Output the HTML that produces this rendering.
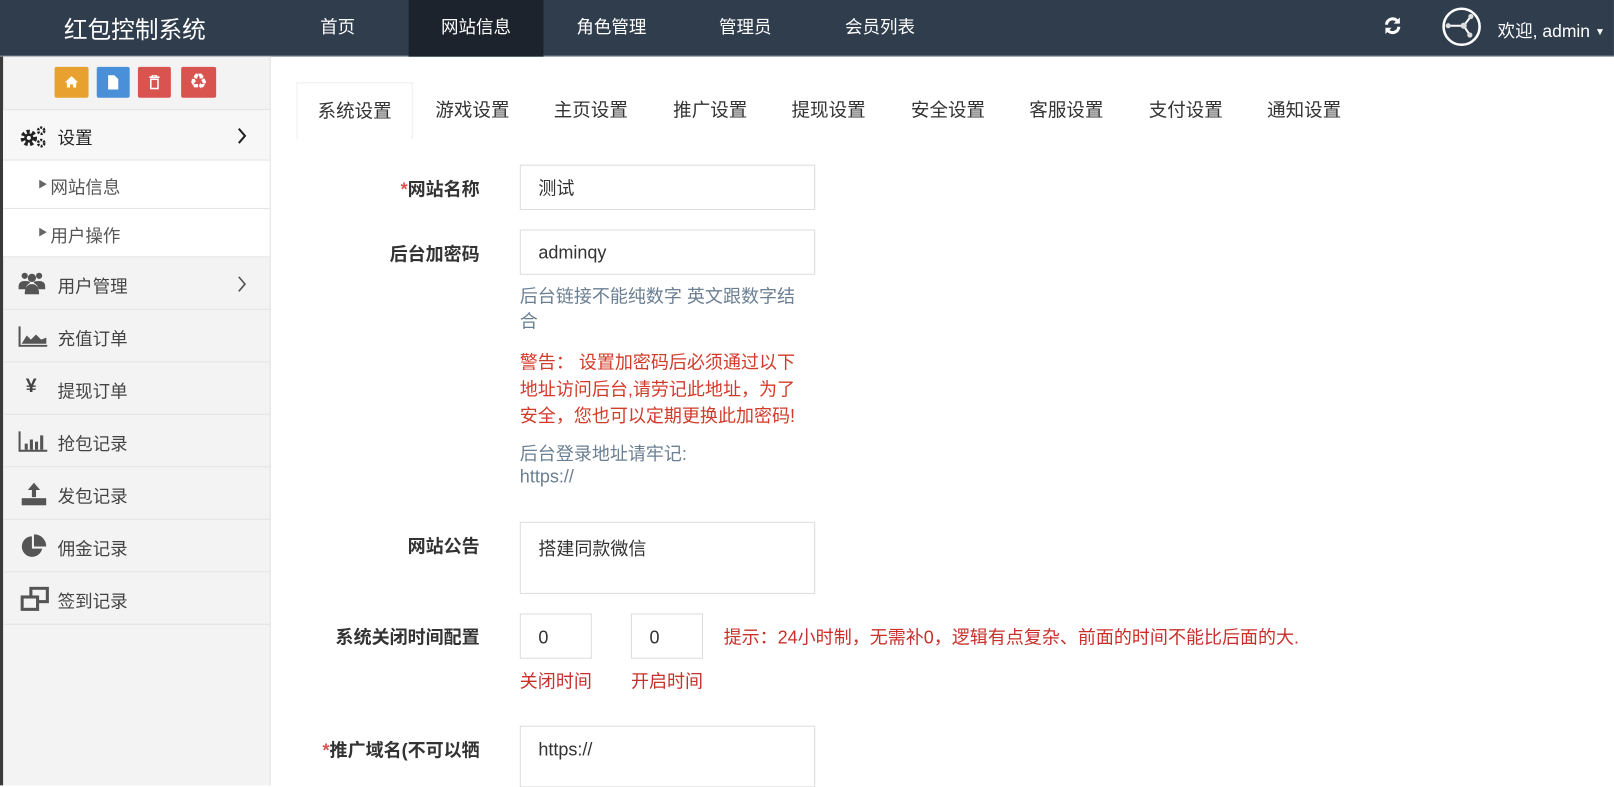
<!DOCTYPE html>
<html><head><meta charset="utf-8"><style>
*{box-sizing:border-box;margin:0;padding:0}
html,body{width:1614px;height:763px;overflow:hidden;background:#fff}
body{font-family:"Liberation Sans","Noto Sans CJK SC",sans-serif;color:#333}
#w{position:absolute;left:0;top:0;width:1568px;height:742px;transform:scale(1.0293);transform-origin:0 0}
.hdr{position:absolute;left:0;top:0;width:1568px;height:55px;background:#2f3d4d;border-bottom:1px solid #8a939c}
.hdr .logo{position:absolute;left:62px;top:10px;font-size:23px;color:#fff}
.nav{position:absolute;top:0;height:55px;line-height:53px;color:#fff;font-size:17px;text-align:center}
.side{position:absolute;left:0;top:55px;width:263px;height:708px;background:#f3f3f3;border-left:3px solid #3a3a3a;border-right:1px solid #e2e2e2}
.btns{position:absolute;top:10px;left:50px}
.btn{position:absolute;top:0;height:30px;border-radius:2px}
.row{position:absolute;left:0;width:259px;border-bottom:1px solid #e3e3e3;font-size:17px;color:#444}
.row .t{position:absolute;left:53px}
.sub{background:#fff}
.ic{position:absolute;left:15px}
.chev{position:absolute;left:227px}
.tabs{position:absolute;top:80px;left:288px;height:55px}
.tab{position:absolute;top:0;height:55px;line-height:54px;font-size:18px;color:#333;text-align:center}
.lab{position:absolute;right:1102px;font-size:17.5px;font-weight:bold;color:#333;white-space:nowrap}
.inp{position:absolute;border:1px solid #ddd;background:#fff;font-size:17.5px;color:#333;padding-left:17px}
.txt{position:absolute;left:505px;font-size:17.5px;white-space:nowrap}
</style></head><body><div id="w">
<div class="hdr">
<div class="logo">红包控制系统</div>
<div class="nav" style="left:290px;width:76px">首页</div>
<div class="nav" style="left:397px;width:131px;background:#1c232d">网站信息</div>
<div class="nav" style="left:548px;width:92px">角色管理</div>
<div class="nav" style="left:686px;width:76px">管理员</div>
<div class="nav" style="left:810px;width:90px">会员列表</div>
<svg style="position:absolute;left:1343px;top:15px" width="20" height="20" viewBox="0 0 20 20"><path d="M4 9a6 6 0 0 1 11-3" stroke="#fff" stroke-width="3" fill="none"/><path d="M17 2v6h-6z" fill="#fff"/><path d="M16 11a6 6 0 0 1-11 3" stroke="#fff" stroke-width="3" fill="none"/><path d="M3 18v-6h6z" fill="#fff"/></svg>
<svg style="position:absolute;left:1400px;top:6px" width="40" height="40" viewBox="0 0 40 40"><circle cx="20" cy="20" r="17.5" stroke="#fff" stroke-width="2.5" fill="none"/><path d="M7 19h15l7-9M22 19l6 9" stroke="#fff" stroke-width="2" fill="none"/><circle cx="7" cy="19" r="2.5" fill="#ddd"/><circle cx="22" cy="19" r="3" fill="#ddd"/><circle cx="29" cy="10" r="2.5" fill="#ddd"/><circle cx="28" cy="28" r="2.5" fill="#ddd"/></svg>
<div style="position:absolute;left:1455px;top:16px;color:#fff;font-size:17px">欢迎, admin <span style="font-size:10px;vertical-align:2px">▼</span></div>
</div>
<div class="side">
<div class="btns">
<div class="btn" style="left:0;width:33px;background:#e8a12e"><svg style="position:absolute;left:10px;top:9px" width="13" height="11" viewBox="0 0 13 11"><path d="M6.5 0L0 6h2v5h3V8h3v3h3V6h2z" fill="#fff"/></svg></div>
<div class="btn" style="left:41px;width:32px;background:#4a90d9"><svg style="position:absolute;left:11px;top:8px" width="10" height="14" viewBox="0 0 10 14"><path d="M0 0h6l4 4v10H0z" fill="#fff"/></svg></div>
<div class="btn" style="left:81px;width:32px;background:#d9534f"><svg style="position:absolute;left:11px;top:8px" width="10" height="14" viewBox="0 0 10 14"><path d="M0 2h10M3 2V0h4v2" stroke="#fff" stroke-width="1.5" fill="none"/><rect x="1.5" y="4" width="7" height="9" stroke="#fff" stroke-width="1.5" fill="none"/></svg></div>
<div class="btn" style="left:123px;width:34px;background:#d9534f;color:#fff;text-align:center;line-height:30px;font-size:15px">♻</div>
</div>
<div class="row" style="top:51px;height:50px;border-top:1px solid #e3e3e3;background:#f7f7f7"><svg class="ic" style="top:15px;left:16px" width="26" height="22" viewBox="0 0 26 22"><circle cx="9" cy="12" r="6" fill="none" stroke="#222" stroke-width="4" stroke-dasharray="3 2.2"/><circle cx="9" cy="12" r="4.5" fill="#222"/><circle cx="9" cy="12" r="2" fill="#f7f7f7"/><circle cx="21" cy="5" r="3" fill="none" stroke="#222" stroke-width="2.5" stroke-dasharray="2 1.2"/><circle cx="21" cy="17" r="3" fill="none" stroke="#222" stroke-width="2.5" stroke-dasharray="2 1.2"/></svg><span class="t" style="top:13px;color:#222">设置</span><svg class="chev" style="top:17px" width="10" height="16" viewBox="0 0 10 16"><path d="M2 1l6 7-6 7" stroke="#222" stroke-width="2" fill="none"/></svg></div>
<div class="row sub" style="top:101px;height:47px"><span style="position:absolute;left:34px;top:16px;font-size:9px;color:#666">▶</span><span style="position:absolute;left:46px;top:12px;color:#555">网站信息</span></div>
<div class="row sub" style="top:148px;height:47px"><span style="position:absolute;left:34px;top:16px;font-size:9px;color:#666">▶</span><span style="position:absolute;left:46px;top:12px;color:#555">用户操作</span></div>
<div class="row" style="top:195px;height:51px"><svg class="ic" style="top:14px" width="26" height="22" viewBox="0 0 26 22"><circle cx="6" cy="4" r="3" fill="#555"/><circle cx="20" cy="4" r="3" fill="#555"/><circle cx="13" cy="6" r="4" fill="#555"/><path d="M0 15q0-6 6-6t5 2q-4 2-4 6H0zM26 15q0-6-6-6t-5 2q4 2 4 6h7zM6 22q0-10 7-10t7 10z" fill="#555"/></svg><span class="t" style="top:14px">用户管理</span><svg class="chev" style="top:18px" width="10" height="16" viewBox="0 0 10 16"><path d="M2 1l6 7-6 7" stroke="#555" stroke-width="1.6" fill="none"/></svg></div>
<div class="row" style="top:246px;height:51px"><svg class="ic" style="top:16px" width="28" height="20" viewBox="0 0 28 20"><path d="M1 0v19h27" stroke="#555" stroke-width="2" fill="none"/><path d="M3 17l5-8 4 4 5-5 5 5 5-2v6z" fill="#555"/></svg><span class="t" style="top:14px">充值订单</span></div>
<div class="row" style="top:297px;height:51px"><span class="ic" style="left:22px;top:13px;font-size:19px;font-weight:bold;color:#444">¥</span><span class="t" style="top:14px">提现订单</span></div>
<div class="row" style="top:348px;height:51px"><svg class="ic" style="top:16px" width="28" height="20" viewBox="0 0 28 20"><path d="M1 0v19h27" stroke="#555" stroke-width="2" fill="none"/><path d="M6 12h3v6H6zM11 8h3v10h-3zM16 10h3v8h-3zM21 4h3v14h-3z" fill="#555"/></svg><span class="t" style="top:14px">抢包记录</span></div>
<div class="row" style="top:399px;height:51px"><svg class="ic" style="top:15px;left:18px" width="24" height="22" viewBox="0 0 24 22"><path d="M12 0l6 7h-4v7h-4V7H6z" fill="#555"/><rect x="0" y="15" width="24" height="7" fill="#555"/></svg><span class="t" style="top:14px">发包记录</span></div>
<div class="row" style="top:450px;height:51px"><svg class="ic" style="top:14px;left:18px" width="24" height="24" viewBox="0 0 24 24"><path d="M10 2a10 10 0 1 0 10 12H10z" fill="#555"/><path d="M12 0v12h12A12 12 0 0 0 12 0z" fill="#555"/></svg><span class="t" style="top:14px">佣金记录</span></div>
<div class="row" style="top:501px;height:51px"><svg class="ic" style="top:14px;left:17px" width="28" height="24" viewBox="0 0 28 24"><rect x="10" y="1.5" width="16" height="13" stroke="#555" stroke-width="3" fill="none"/><rect x="1.5" y="10" width="15" height="12" stroke="#555" stroke-width="3" fill="#f3f3f3"/></svg><span class="t" style="top:14px">签到记录</span></div>
</div>
<div class="tabs">
<div class="tab" style="left:0;width:113px;border:1px solid #eee;border-bottom:none;background:#fff">系统设置</div>
<div class="tab" style="left:117px;width:108px">游戏设置</div>
<div class="tab" style="left:232px;width:108px">主页设置</div>
<div class="tab" style="left:348px;width:108px">推广设置</div>
<div class="tab" style="left:463px;width:108px">提现设置</div>
<div class="tab" style="left:579px;width:108px">安全设置</div>
<div class="tab" style="left:694px;width:108px">客服设置</div>
<div class="tab" style="left:810px;width:108px">支付设置</div>
<div class="tab" style="left:925px;width:108px">通知设置</div>
</div>
<div class="lab" style="top:171px"><span style="color:#d9534f">*</span>网站名称</div>
<div class="inp" style="left:505px;top:160px;width:287px;height:44px;line-height:44px">测试</div>
<div class="lab" style="top:234px">后台加密码</div>
<div class="inp" style="left:505px;top:223px;width:287px;height:44px;line-height:42px">adminqy</div>
<div class="txt" style="top:276px;color:#6b7f93;line-height:24px">后台链接不能纯数字 英文跟数字结<br>合</div>
<div class="txt" style="top:339px;color:#d23a2a;line-height:26px">警告： 设置加密码后必须通过以下<br>地址访问后台,请劳记此地址，为了<br>安全，您也可以定期更换此加密码!</div>
<div class="txt" style="top:430px;color:#6b7f93;line-height:22px">后台登录地址请牢记:<br>https://</div>
<div class="lab" style="top:518px">网站公告</div>
<div class="inp" style="left:505px;top:507px;width:287px;height:70px;padding-top:12px">搭建同款微信</div>
<div class="lab" style="top:606px">系统关闭时间配置</div>
<div class="inp" style="left:505px;top:596px;width:70px;height:44px;line-height:44px">0</div>
<div class="inp" style="left:613px;top:596px;width:70px;height:44px;line-height:44px">0</div>
<div class="txt" style="left:703px;top:606px;color:#c9302c">提示：24小时制，无需补0，逻辑有点复杂、前面的时间不能比后面的大.</div>
<div class="txt" style="top:649px;color:#c9302c">关闭时间</div>
<div class="txt" style="left:613px;top:649px;color:#c9302c">开启时间</div>
<div class="lab" style="top:716px"><span style="color:#d9534f">*</span>推广域名(不可以牺</div>
<div class="inp" style="left:505px;top:705px;width:287px;height:60px;line-height:44px">https://</div>
</div></body></html>
